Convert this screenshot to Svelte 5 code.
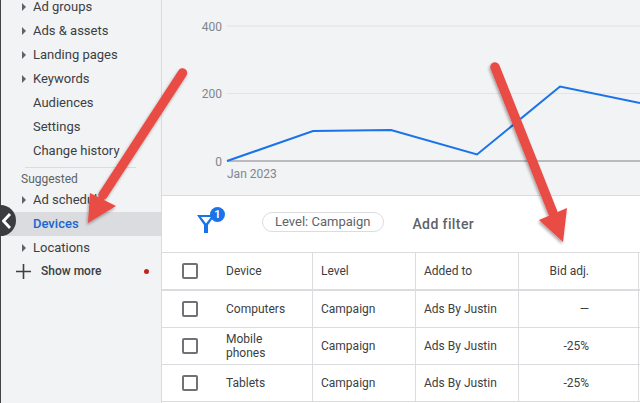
<script>
	const navTop = [
		{ label: 'Ad groups', caret: true },
		{ label: 'Ads & assets', caret: true },
		{ label: 'Landing pages', caret: true },
		{ label: 'Keywords', caret: true },
		{ label: 'Audiences' },
		{ label: 'Settings' },
		{ label: 'Change history' }
	];
	const navBottom = [
		{ label: 'Ad schedule', caret: true },
		{ label: 'Devices', active: true },
		{ label: 'Locations', caret: true }
	];
	const rows = [
		{ device: 'Computers', bid: '—' },
		{ device: 'Mobile phones', bid: '-25%' },
		{ device: 'Tablets', bid: '-25%' }
	];
</script>

<div class="page">
	<aside class="side">
		<ul class="nav top">
			{#each navTop as item}
				<li class="nav-item">
					{#if item.caret}<span class="caret"></span>{/if}
					{item.label}
				</li>
			{/each}
		</ul>
		<div class="rule"></div>
		<div class="suggested">Suggested</div>
		<ul class="nav">
			{#each navBottom as item}
				<li class="nav-item" class:active={item.active}>
					{#if item.caret}<span class="caret"></span>{/if}
					{item.label}
				</li>
			{/each}
		</ul>
		<div class="more">
			<svg class="plus" width="15" height="15" viewBox="0 0 15 15"><path d="M7.500 0v15M0 7.500h15" stroke="#3c4043" stroke-width="1.6" fill="none" /></svg>
			<span>Show more</span>
			<i class="dot"></i>
		</div>
	</aside>

	<main class="main">
		<section class="chart">
			<svg width="478" height="195" viewBox="0 0 478 195">
				<line x1="65" y1="26" x2="478" y2="26" stroke="#e6e7e9" stroke-width="1.4" />
				<line x1="65" y1="93.500" x2="478" y2="93.500" stroke="#e2e4e6" />
				<line x1="65" y1="161" x2="478" y2="161" stroke="#a8a9ab" stroke-width="1.6" />
				<polyline points="65,161 151,131 229,130 315,154.500 398,86.500 478,103" fill="none" stroke="#1a73e8" stroke-width="2" />
				<g class="axis">
					<text x="60" y="30.500" text-anchor="end">400</text>
					<text x="60" y="98" text-anchor="end">200</text>
					<text x="60" y="165.500" text-anchor="end">0</text>
					<text x="65" y="178">Jan 2023</text>
				</g>
			</svg>
		</section>

		<section class="filters">
			<span class="funnel">
				<svg width="18" height="18" viewBox="0 0 18 18"><path fill-rule="evenodd" d="M0 0h18L11 10v8H7V10zM4 2l5 6.500L14 2z" fill="#1a73e8" /></svg>
				<b class="badge">1</b>
			</span>
			<span class="chip">Level: Campaign</span>
			<span class="add">Add filter</span>
		</section>

		<div class="table">
			<div class="row head">
				<div class="cell check"><span class="box"></span></div>
				<div class="cell device">Device</div>
				<div class="cell level">Level</div>
				<div class="cell added">Added to</div>
				<div class="cell bid">Bid adj.</div>
				<div class="cell rest"></div>
			</div>
			{#each rows as row}
				<div class="row">
					<div class="cell check"><span class="box"></span></div>
					<div class="cell device">{row.device}</div>
					<div class="cell level">Campaign</div>
					<div class="cell added">Ads By Justin</div>
					<div class="cell bid">{row.bid}</div>
					<div class="cell rest"></div>
				</div>
			{/each}
		</div>
	</main>

	<!-- collapse handle sits over the sidebar edge -->
	<div class="handle">
		<svg width="12" height="18" viewBox="0 0 12 18"><path d="M8 2 1.500 9 8 16" fill="none" stroke="#fff" stroke-width="2.8" /></svg>
	</div>

	<!-- annotation arrows drawn on top of the screenshot -->
	<svg class="arrows" width="640" height="403" viewBox="0 0 640 403">
		<defs>
			<filter id="sh" x="-20%" y="-20%" width="140%" height="140%">
				<feDropShadow dx="-1" dy="2" stdDeviation="1.500" flood-color="#000" flood-opacity="0.35" />
			</filter>
		</defs>
		<g filter="url(#sh)">
			<path d="M182.500 73 103 195" stroke="#e94b45" stroke-width="9.500" stroke-linecap="round" fill="none" />
			<path d="M88 223 90 193 116 206z" fill="#e94b45" />
		</g>
		<g filter="url(#sh)">
			<path d="M495 67 553 213" stroke="#e94b45" stroke-width="9.500" stroke-linecap="round" fill="none" />
			<path d="M563 242 539 220 567 208z" fill="#e94b45" />
		</g>
	</svg>
</div>

<style>
	:global(body) {
		margin: 0;
		background: #fff;
	}

	.page {
		position: relative;
		display: flex;
		width: 640px;
		height: 403px;
		overflow: hidden;
		font-family: Roboto, 'Liberation Sans', sans-serif;
		color: #3c4043;
	}

	.side {
		flex: none;
		box-sizing: border-box;
		width: 162px;
		background: #f1f3f4;
		border-right: 1px solid #d8dadc;
		border-left: 1px solid #444;
	}

	.nav {
		list-style: none;
		margin: 0;
		padding: 0;
	}

	.nav.top {
		margin-top: -5px;
	}

	.nav-item {
		position: relative;
		height: 24px;
		line-height: 24px;
		padding-left: 32px;
		font-size: 13px;
		color: #3c4043;
	}

	.nav-item.active {
		background: #dadce0;
		color: #1967d2;
		font-weight: 500;
		box-shadow: inset 3px 0 #1967d2;
	}

	.caret {
		position: absolute;
		left: 21px;
		top: 8px;
		border-left: 4px solid #5f6368;
		border-top: 4px solid transparent;
		border-bottom: 4px solid transparent;
	}

	.rule {
		height: 1px;
		margin: 4px 25px 0 24px;
		background: #dadce0;
	}

	.suggested {
		height: 17px;
		line-height: 17px;
		margin-top: 3px;
		padding-left: 20px;
		font-size: 12px;
		color: #5f6368;
	}

	.more {
		display: flex;
		align-items: center;
		height: 22px;
		padding-left: 15px;
		font-size: 12px;
		font-weight: 500;
		color: #3c4043;
	}

	.plus {
		flex: none;
		margin-right: 10px;
	}

	.dot {
		width: 5px;
		height: 5px;
		margin-left: 43px;
		border-radius: 50%;
		background: #c5221f;
	}

	.main {
		flex: 1;
		min-width: 0;
		display: flex;
		flex-direction: column;
	}

	.chart {
		flex: none;
		height: 196px;
		background: #f1f3f5;
		border-bottom: 1px solid #dadce0;
		box-sizing: border-box;
	}

	.chart svg {
		display: block;
	}

	.axis text {
		font-size: 12px;
		fill: #80868b;
	}

	.filters {
		flex: none;
		display: flex;
		align-items: center;
		height: 56px;
		box-sizing: border-box;
		padding-left: 35px;
	}

	.funnel {
		position: relative;
		width: 18px;
		height: 18px;
	}

	.funnel svg {
		display: block;
	}

	.badge {
		position: absolute;
		left: 13px;
		top: -8px;
		width: 15px;
		height: 15px;
		border-radius: 50%;
		background: #1a73e8;
		color: #fff;
		font-size: 11px;
		font-weight: 700;
		line-height: 15px;
		text-align: center;
	}

	.chip {
		margin: 0 0 4px 47px;
		box-sizing: border-box;
		height: 20px;
		line-height: 18px;
		padding: 0 13px 0 12px;
		border: 1px solid #dadce0;
		border-radius: 10px;
		font-size: 13px;
		color: #5f6368;
		background: #fff;
	}

	.add {
		margin-left: 28px;
		font-size: 14px;
		font-weight: 500;
		letter-spacing: 0.4px;
		color: #5f6368;
	}

	.table {
		flex: 1;
		border-top: 1px solid #dadce0;
	}

	.row {
		display: flex;
		height: 37px;
		box-sizing: border-box;
		border-bottom: 1px solid #dadce0;
		font-size: 12px;
		color: #3c4043;
	}

	.row.head {
		height: 38px;
		border-bottom-width: 2px;
	}

	.cell {
		flex: none;
		box-sizing: border-box;
		display: flex;
		align-items: center;
		border-right: 1px solid #dadce0;
		line-height: 14px;
	}

	.check {
		width: 64px;
		padding-left: 20px;
		border-right: none;
	}

	.box {
		width: 12px;
		height: 12px;
		border: 2px solid #6f7276;
		border-radius: 2px;
	}

	.device {
		width: 87px;
		padding-right: 16px;
	}

	.level,
	.added {
		width: 103px;
		padding-left: 8px;
	}

	.bid {
		width: 120px;
		justify-content: flex-end;
		padding-right: 49px;
	}

	.rest {
		flex: 1;
		border-right: none;
	}

	.handle {
		position: absolute;
		left: -15px;
		top: 205px;
		box-sizing: border-box;
		display: flex;
		align-items: center;
		justify-content: flex-end;
		width: 31px;
		height: 31px;
		padding-right: 2px;
		border-radius: 50%;
		background: #3a3c3f;
	}

	.arrows {
		position: absolute;
		left: 0;
		top: 0;
		pointer-events: none;
	}
</style>
